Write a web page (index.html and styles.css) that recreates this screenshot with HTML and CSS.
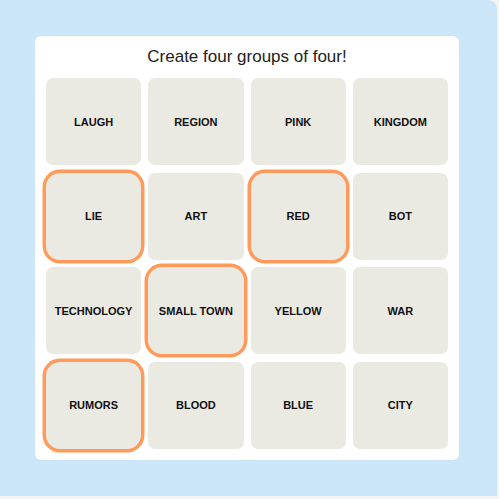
FILE: index.html
```html
<!DOCTYPE html>
<html lang="en">
<head>
	<meta charset="UTF-8">
	<meta name="viewport" content="width=device-width, initial-scale=1.0">
	<title>Connections</title>
	<link rel="stylesheet" href="styles.css">
</head>
<body>
	<div class="frame">
		<div class="board">
			<h1 class="prompt">Create four groups of four!</h1>
			<div class="grid">
				<div class="tile">LAUGH</div>
				<div class="tile">REGION</div>
				<div class="tile">PINK</div>
				<div class="tile">KINGDOM</div>

				<div class="tile selected">LIE</div>
				<div class="tile">ART</div>
				<div class="tile selected">RED</div>
				<div class="tile">BOT</div>

				<div class="tile">TECHNOLOGY</div>
				<div class="tile selected">SMALL TOWN</div>
				<div class="tile">YELLOW</div>
				<div class="tile">WAR</div>

				<div class="tile selected">RUMORS</div>
				<div class="tile">BLOOD</div>
				<div class="tile">BLUE</div>
				<div class="tile">CITY</div>
			</div>
		</div>
	</div>
</body>
</html>
```

FILE: styles.css
```css
body {
	margin: 0;
	background-color: #f2f4f5;
	font-family: "Liberation Sans", Arial, sans-serif;
}
.frame {
	width: 497px;
	height: 496px;
	box-sizing: border-box;
	padding: 36px 0 0 35px;
	background-color: #cbe6f8;
	border-top-right-radius: 9px;
}
.board {
	width: 424px;
	height: 424px;
	box-sizing: border-box;
	padding: 0 11px 11px;
	background-color: white;
	border-radius: 6px;
	display: flex;
	flex-direction: column;
}
.prompt {
	margin: 0;
	height: 42px;
	line-height: 42px;
	text-align: center;
	font-size: 17px;
	font-weight: normal;
	color: #222;
}
.grid {
	flex: 1;
	display: grid;
	grid-template-columns: repeat(4, 1fr);
	grid-template-rows: repeat(4, 1fr);
	gap: 7.67px 7px;
}
.tile {
	display: flex;
	align-items: center;
	justify-content: center;
	background-color: #ebeae2;
	border-radius: 7px;
	font-size: 11px;
	font-weight: bold;
	color: #111;
	white-space: nowrap;
}
.tile.selected {
	border-radius: 14px;
	box-shadow: 0 0 0 3.5px #ff9a5a;
}
```
